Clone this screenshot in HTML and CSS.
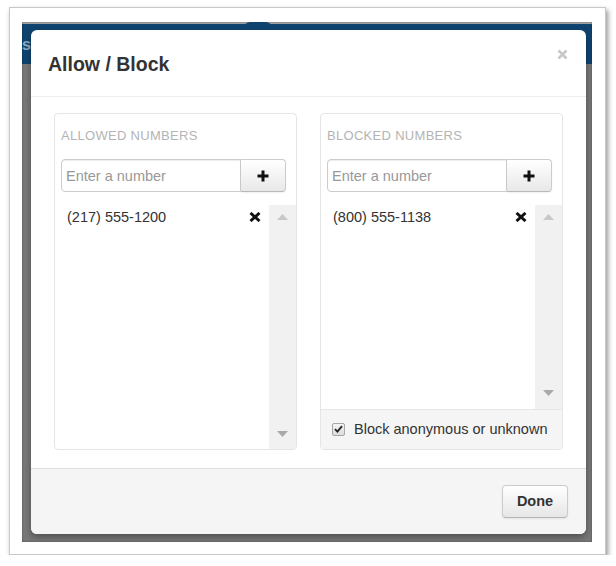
FILE: index.html
```html
<!DOCTYPE html>
<html lang="en">
<head>
<meta charset="utf-8">
<title>Allow / Block</title>
<link rel="stylesheet" href="styles.css">
</head>
<body>
<div class="frame">
  <div class="backdrop">
    <div class="nav-bump"></div>
    <span class="nav-text">s</span>
    <div class="modal">
      <div class="modal-header">
        <h3 class="modal-title">Allow / Block</h3>
        <span class="close" aria-label="Close"><svg width="11" height="11" viewBox="0 0 11 11"><path d="M1.5 1.5L9.5 9.5M9.5 1.5L1.5 9.5" stroke="#c8c8c8" stroke-width="2.6" fill="none"/></svg></span>
      </div>
      <div class="modal-body">
        <section class="panel">
          <div class="panel-title">ALLOWED NUMBERS</div>
          <div class="input-group">
            <input class="num-input" type="text" placeholder="Enter a number">
            <button class="add-btn" type="button"><svg width="12" height="12" viewBox="0 0 12 12"><path d="M6 0.5V11.5M0.5 6H11.5" stroke="#111" stroke-width="3" fill="none"/></svg></button>
          </div>
          <div class="list">
            <ul class="items">
              <li class="item"><span>(217) 555-1200</span><svg class="del" width="12" height="10" viewBox="0 0 12 10"><path d="M1.5 1L10.5 9M10.5 1L1.5 9" stroke="#111" stroke-width="3" fill="none"/></svg></li>
            </ul>
            <div class="track track-long">
              <svg width="11" height="6" viewBox="0 0 11 6"><path d="M0 6L5.5 0L11 6Z" fill="#c8c8c8"/></svg>
              <svg width="11" height="6" viewBox="0 0 11 6"><path d="M0 0L5.5 6L11 0Z" fill="#a9a9a9"/></svg>
            </div>
          </div>
        </section>
        <section class="panel">
          <div class="panel-title">BLOCKED NUMBERS</div>
          <div class="input-group">
            <input class="num-input" type="text" placeholder="Enter a number">
            <button class="add-btn" type="button"><svg width="12" height="12" viewBox="0 0 12 12"><path d="M6 0.5V11.5M0.5 6H11.5" stroke="#111" stroke-width="3" fill="none"/></svg></button>
          </div>
          <div class="list">
            <ul class="items">
              <li class="item"><span>(800) 555-1138</span><svg class="del" width="12" height="10" viewBox="0 0 12 10"><path d="M1.5 1L10.5 9M10.5 1L1.5 9" stroke="#111" stroke-width="3" fill="none"/></svg></li>
            </ul>
            <div class="track">
              <svg width="11" height="6" viewBox="0 0 11 6"><path d="M0 6L5.5 0L11 6Z" fill="#c8c8c8"/></svg>
              <svg width="11" height="6" viewBox="0 0 11 6"><path d="M0 0L5.5 6L11 0Z" fill="#a9a9a9"/></svg>
            </div>
          </div>
          <label class="panel-footer">
            <span class="check"><svg width="9" height="8" viewBox="0 0 9 8"><path d="M1 4.2L3.4 6.6L8 1.2" stroke="#222" stroke-width="1.8" fill="none"/></svg></span>
            <span>Block anonymous or unknown</span>
          </label>
        </section>
      </div>
      <div class="modal-footer">
        <button class="btn" type="button">Done</button>
      </div>
    </div>
  </div>
</div>
</body>
</html>
```

FILE: styles.css
```css
* { box-sizing: border-box; }

html, body {
  margin: 0;
  padding: 0;
  background: #fff;
}

body {
  font-family: "Liberation Sans", Arial, sans-serif;
  color: #333;
}

.frame {
  margin: 7px 0 0 9px;
  width: 597px;
  height: 548px;
  border: 1px solid #c8c8c8;
  background: #fff;
  padding: 14px 0 0 12px;
  box-shadow: 2px 3px 5px rgba(0, 0, 0, 0.42);
}

.backdrop {
  position: relative;
  width: 570px;
  height: 520px;
  overflow: hidden;
  padding: 8px 0 0 9px;
  background: linear-gradient(#a4a4a4 0 2px, #0f4471 2px 42px, #787878 42px);
  box-shadow: inset 0 0 2px rgba(0, 0, 0, 0.4);
}

.nav-bump {
  position: absolute;
  left: 222px;
  top: 0;
  width: 28px;
  height: 6px;
  border-radius: 7px 7px 0 0;
  background: #0f4471;
}

.nav-text {
  position: absolute;
  left: 0;
  top: 14px;
  font-size: 16px;
  font-weight: bold;
  color: #8eabc4;
}

.modal {
  position: relative;
  z-index: 1;
  width: 555px;
  height: 504px;
  background: #fff;
  border-radius: 6px;
  box-shadow: 0 3px 7px rgba(0, 0, 0, 0.35);
  display: flex;
  flex-direction: column;
}

.modal-header {
  height: 67px;
  border-bottom: 1px solid #eee;
  padding: 0 18px 0 17px;
  display: flex;
  justify-content: space-between;
  align-items: flex-start;
}

.modal-title {
  margin: 0;
  align-self: center;
  font-size: 19.5px;
  font-weight: bold;
  color: #333;
  line-height: 24px;
  padding-top: 1px;
}

.close {
  display: flex;
  margin-top: 19px;
}

.modal-body {
  height: 371px;
  padding: 16px 23px 18px;
  display: flex;
  gap: 23px;
}

.panel {
  width: 243px;
  border: 1px solid #e5e5e5;
  border-radius: 4px;
  overflow: hidden;
  display: flex;
  flex-direction: column;
}

.panel-title {
  padding: 13px 6px 0;
  font-size: 13px;
  line-height: 18px;
  letter-spacing: 0.3px;
  color: #b4b4b4;
}

.input-group {
  display: flex;
  margin: 14px 10px 0 6px;
  height: 33px;
}

.num-input {
  width: 180px;
  height: 33px;
  margin: 0;
  border: 1px solid #ccc;
  border-radius: 4px 0 0 4px;
  padding: 0 4px;
  font-family: "Liberation Sans", Arial, sans-serif;
  font-size: 14.5px;
  color: #555;
  box-shadow: inset 0 1px 1px rgba(0, 0, 0, 0.075);
  outline: none;
}

.num-input::placeholder {
  color: #999;
}

.add-btn {
  width: 45px;
  height: 33px;
  margin: 0;
  padding: 0;
  border: 1px solid #ccc;
  border-left: 0;
  border-bottom-color: #b8b8b8;
  border-radius: 0 4px 4px 0;
  background: linear-gradient(#ffffff, #e8e8e8);
  box-shadow: 0 1px 2px rgba(0, 0, 0, 0.06);
  display: flex;
  align-items: center;
  justify-content: center;
}

.list {
  flex: 1;
  margin-top: 13px;
  display: flex;
}

.items {
  flex: 1;
  list-style: none;
  margin: 0;
  padding: 0;
}

.item {
  display: flex;
  align-items: center;
  justify-content: space-between;
  padding: 3px 8px 3px 12px;
  font-size: 14.5px;
  line-height: 18px;
  color: #333;
}

.del {
  display: block;
}

.track {
  width: 27px;
  background: #f1f1f1;
  display: flex;
  flex-direction: column;
  align-items: center;
  justify-content: space-between;
  padding: 9px 0 13px;
}

.track-long {
  padding-bottom: 12px;
}

.track svg {
  display: block;
}

.panel-footer {
  height: 40px;
  border-top: 1px solid #e5e5e5;
  background: #f5f5f5;
  display: flex;
  align-items: center;
  gap: 9px;
  padding: 0 0 1px 11px;
  font-size: 14.5px;
  color: #333;
}

.check {
  width: 13px;
  height: 13px;
  border: 1px solid #a6a6a6;
  border-radius: 2px;
  background: linear-gradient(#f4f4f4, #dcdcdc);
  display: flex;
  align-items: center;
  justify-content: center;
}

.modal-footer {
  flex: 1;
  background: #f5f5f5;
  border-top: 1px solid #ddd;
  border-radius: 0 0 6px 6px;
  display: flex;
  justify-content: flex-end;
  align-items: center;
  padding: 0 18px 1px 0;
}

.btn {
  width: 66px;
  height: 33px;
  border: 1px solid #ccc;
  border-bottom-color: #b5b5b5;
  border-radius: 4px;
  background: linear-gradient(#ffffff, #e6e6e6);
  box-shadow: 0 1px 2px rgba(0, 0, 0, 0.08);
  font-family: "Liberation Sans", Arial, sans-serif;
  font-size: 14.5px;
  font-weight: bold;
  color: #333;
  padding: 0;
}
```
